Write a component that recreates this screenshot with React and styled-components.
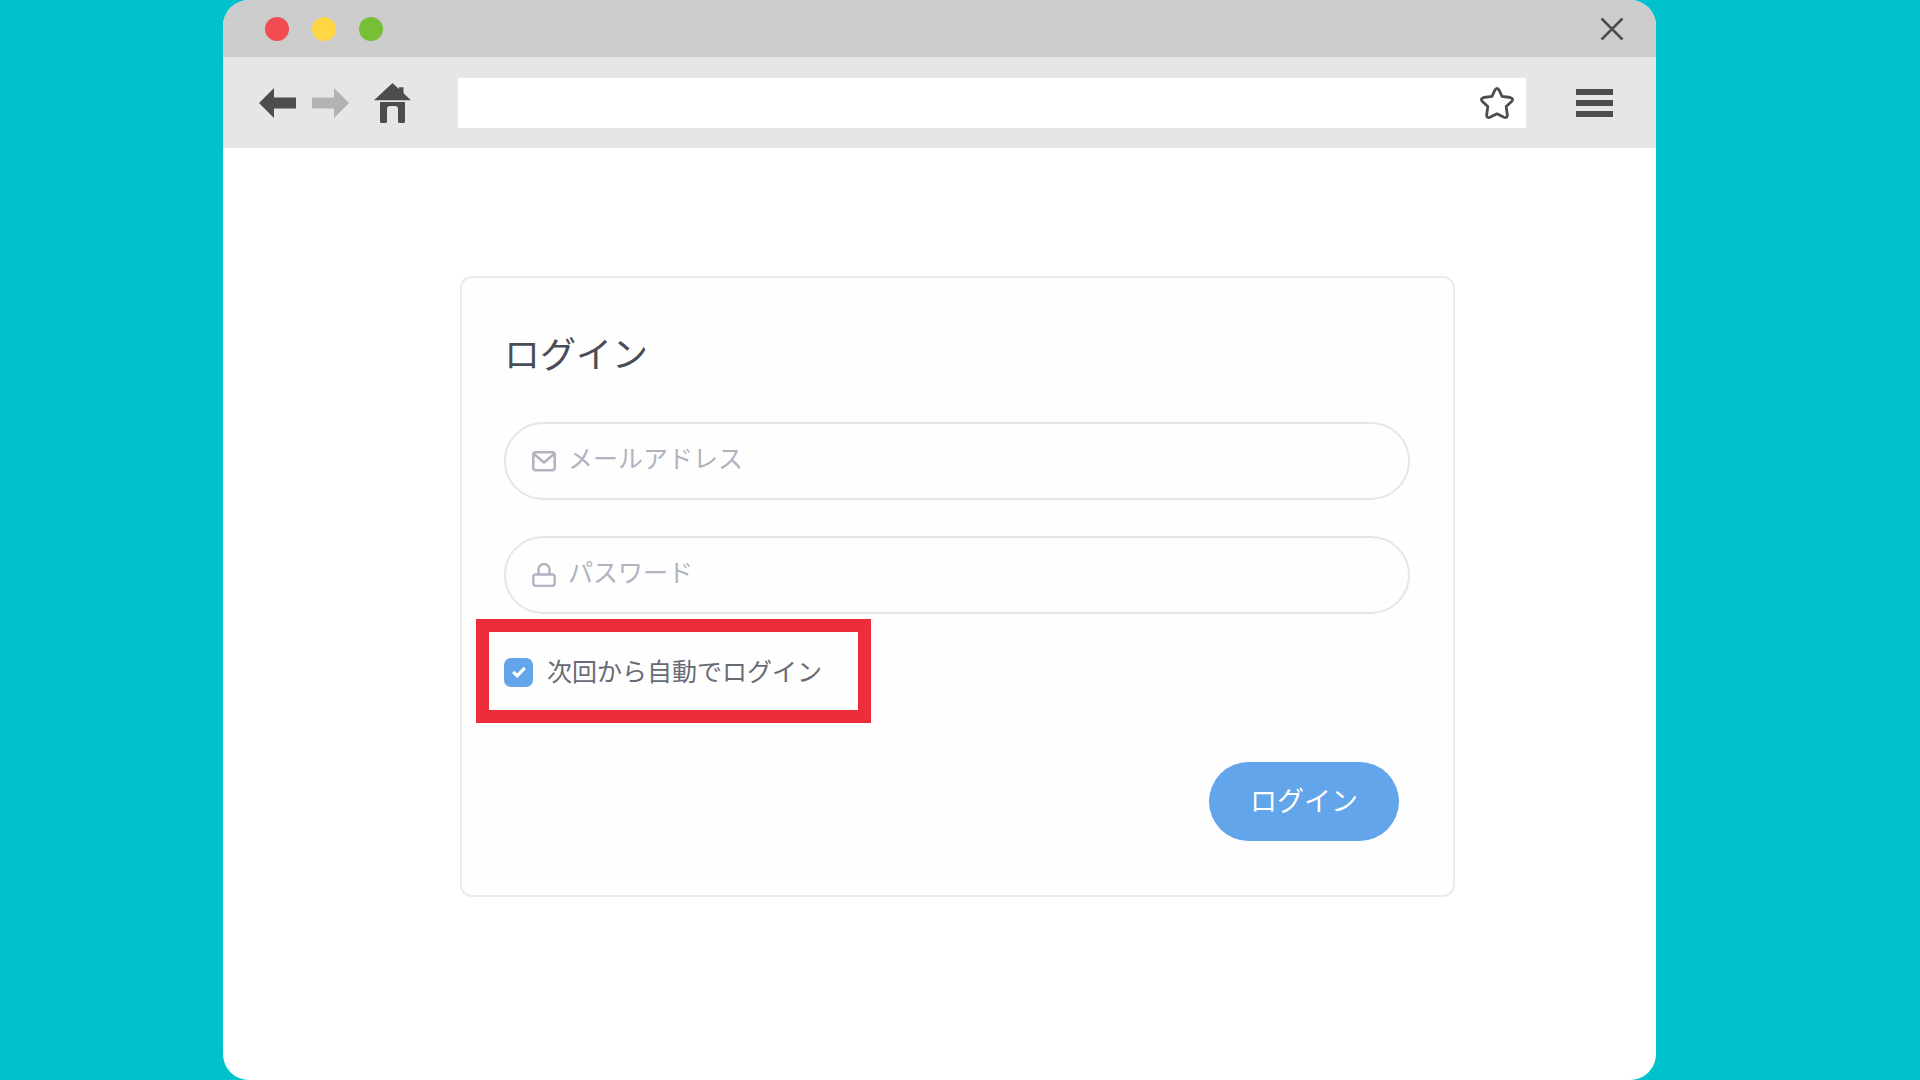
import React, { useState } from "react";
import styled, { createGlobalStyle } from "styled-components";

const GlobalStyle = createGlobalStyle`
  * {
    box-sizing: border-box;
  }

  body {
    margin: 0;
    background: #00c2cd;
    font-family: "Noto Sans CJK JP", sans-serif;
  }

  button, input {
    font-family: inherit;
  }
`;

const Page = styled.div`
  display: flex;
  min-height: 100vh;
  padding: 0 264px 0 223px;
`;

const BrowserWindow = styled.div`
  flex: 1;
  min-width: 0;
  background: #fff;
  border-radius: 26px;
  overflow: hidden;
`;

const TitleBar = styled.header`
  display: flex;
  align-items: center;
  gap: 23px;
  height: 57px;
  padding: 0 32px 0 42px;
  background: #ccc;
`;

const Dot = styled.span`
  width: 24px;
  height: 24px;
  border-radius: 50%;
  background: ${(props) => props.$color};
`;

const IconButton = styled.button`
  display: flex;
  flex: none;
  padding: 0;
  border: 0;
  background: none;
  color: ${(props) => props.$color || "#4d4d4d"};
  cursor: pointer;
`;

const CloseButton = styled(IconButton)`
  margin-left: auto;
`;

const Toolbar = styled.nav`
  display: flex;
  align-items: center;
  height: 91px;
  padding: 0 43px 0 36px;
  background: #e6e6e6;
`;

const NavButtons = styled.div`
  display: flex;
  align-items: center;
  gap: 16px;
  margin-right: 25px;
`;

const AddressBar = styled.div`
  display: flex;
  flex: 1;
  align-items: center;
  min-width: 0;
  height: 50px;
  margin: 0 50px 0 47px;
  padding: 0 12px 0 16px;
  background: #fff;
`;

const AddressInput = styled.input`
  flex: 1;
  min-width: 0;
  border: 0;
  outline: 0;
  background: none;
  font-size: 20px;
`;

const Content = styled.main`
  padding: 128px 201px 40px 237px;
`;

const Card = styled.form`
  display: flex;
  flex-direction: column;
  padding: 47px 43px 54px 42px;
  border: 2px solid #e9ebed;
  border-radius: 12px;
  background: #fefefe;
`;

const Title = styled.h1`
  margin: 0 0 43px;
  color: #4a4d57;
  font-size: 36px;
  font-weight: 400;
  line-height: 54px;
`;

const Fields = styled.div`
  display: grid;
  gap: 36px;
`;

const Field = styled.label`
  display: flex;
  align-items: center;
  gap: 12px;
  height: 78px;
  padding: 0 26px;
  border: 2px solid #e4e7ea;
  border-radius: 40px;
  color: #b0b3c1;
`;

const FieldInput = styled.input`
  flex: 1;
  min-width: 0;
  height: 48px;
  padding: 0 0 8px;
  border: 0;
  outline: 0;
  background: none;
  color: #4a4d57;
  font-size: 25px;

  &::placeholder {
    color: #b0b3c0;
    opacity: 1;
  }
`;

const Highlight = styled.div`
  align-self: flex-start;
  margin: 5px 0 39px -28px;
  padding: 19px 36px 17px 15px;
  border: 13px solid #ed2e3a;
`;

const Remember = styled.label`
  display: flex;
  align-items: center;
  gap: 14px;
  color: #686b76;
  font-size: 25px;
  line-height: 38px;
  cursor: pointer;
`;

const RememberText = styled.span`
  padding-bottom: 4px;
`;

const CheckBox = styled.span`
  display: grid;
  place-items: center;

  > * {
    grid-area: 1 / 1;
  }

  svg {
    pointer-events: none;
  }
`;

const CheckInput = styled.input`
  appearance: none;
  width: 29px;
  height: 29px;
  margin: 0;
  border: 2px solid #62a5ea;
  border-radius: 7px;

  &:checked {
    background: #62a5ea;
  }
`;

const SubmitButton = styled.button`
  align-self: flex-end;
  width: 190px;
  height: 79px;
  margin-right: 11px;
  padding: 0 0 4px;
  border: 0;
  border-radius: 40px;
  background: #62a5ea;
  color: #fff;
  font-size: 27px;
  cursor: pointer;
`;

function ArrowIcon({ flip }) {
  return (
    <svg width="37" height="30" viewBox="0 0 37 30" fill="currentColor" aria-hidden="true">
      <path d={flip ? "M37 15 22 0v9.500H0v11h22V30z" : "M0 15 15 0v9.500h22v11H15V30z"} />
    </svg>
  );
}

function HomeIcon() {
  return (
    <svg width="37" height="40" viewBox="0 0 37 40" fill="currentColor" aria-hidden="true">
      <path d="M18.500 0 25 6V4.300h4.500v6L37 17.200H0z" />
      <path d="M6 19h25v19.500q0 1.500-1.500 1.500h-4q-1.500 0-1.500-1.500V26q0-3-3-3h-5q-3 0-3 3v12.500q0 1.500-1.500 1.500h-4Q6 40 6 38.500z" />
    </svg>
  );
}

function StarIcon() {
  return (
    <svg width="34" height="32" viewBox="0 0 34 32" fill="none" stroke="currentColor" strokeWidth="2.800" strokeLinejoin="round" aria-hidden="true">
      <path d="M14.700 3.500Q17-.5 19.300 3.500L22 9.400l8.300 1.100q3.700 1 1.300 3.900l-5.400 5.200 1.200 8.600q-.2 3.200-3.400 2.100L17 26.800l-7 3.500q-3.200 1.100-3.400-2.100l1.200-8.600-5.400-5.200Q0 11.500 3.700 10.500L12 9.400z" />
    </svg>
  );
}

function MenuIcon() {
  return (
    <svg width="37" height="28" viewBox="0 0 37 28" fill="currentColor" aria-hidden="true">
      <path d="M0 0h37v6H0zM0 11h37v6H0zM0 22h37v6H0z" />
    </svg>
  );
}

function CloseIcon() {
  return (
    <svg width="24" height="24" viewBox="0 0 24 24" fill="none" stroke="currentColor" strokeWidth="2.500" aria-hidden="true">
      <path d="M1.500 1.500l21 21M22.500 1.500l-21 21" />
    </svg>
  );
}

function MailIcon() {
  return (
    <svg width="24" height="24" viewBox="0 0 24 24" fill="none" stroke="currentColor" strokeWidth="2.500" strokeLinejoin="round" aria-hidden="true">
      <rect x="1.300" y="3.300" width="21.400" height="18" rx="2.500" />
      <path d="M2 5l10 8.500L22 5" />
    </svg>
  );
}

function LockIcon() {
  return (
    <svg width="24" height="24" viewBox="0 0 24 24" fill="none" stroke="currentColor" strokeWidth="2.300" aria-hidden="true">
      <rect x="1.300" y="11.500" width="21.400" height="11.300" rx="2.500" />
      <path d="M6.500 11.500V6.500a5.500 5.500 0 0 1 11 0v5" />
    </svg>
  );
}

function CheckIcon() {
  return (
    <svg width="14" height="12" viewBox="0 0 14 12" fill="none" stroke="#fff" strokeWidth="3.200" aria-hidden="true">
      <path d="M1.200 5.800l4 4L12.800 1.800" />
    </svg>
  );
}

function LoginForm() {
  const [remember, setRemember] = useState(true);

  return (
    <Card onSubmit={(e) => e.preventDefault()}>
      <Title>ログイン</Title>
      <Fields>
        <Field>
          <MailIcon />
          <FieldInput type="email" placeholder="メールアドレス" aria-label="メールアドレス" />
        </Field>
        <Field>
          <LockIcon />
          <FieldInput type="password" placeholder="パスワード" aria-label="パスワード" />
        </Field>
      </Fields>
      <Highlight>
        <Remember>
          <CheckBox>
            <CheckInput type="checkbox" checked={remember} onChange={() => setRemember(!remember)} />
            {remember && <CheckIcon />}
          </CheckBox>
          <RememberText>次回から自動でログイン</RememberText>
        </Remember>
      </Highlight>
      <SubmitButton type="submit">ログイン</SubmitButton>
    </Card>
  );
}

function App() {
  return (
    <>
      <GlobalStyle />
      <Page>
        <BrowserWindow>
          <TitleBar>
            <Dot $color="#f14c52" />
            <Dot $color="#ffd744" />
            <Dot $color="#76bf36" />
            <CloseButton type="button" aria-label="閉じる">
              <CloseIcon />
            </CloseButton>
          </TitleBar>
          <Toolbar>
            <NavButtons>
              <IconButton type="button" aria-label="戻る">
                <ArrowIcon />
              </IconButton>
              <IconButton type="button" aria-label="進む" $color="#b3b3b3">
                <ArrowIcon flip />
              </IconButton>
            </NavButtons>
            <IconButton type="button" aria-label="ホーム">
              <HomeIcon />
            </IconButton>
            <AddressBar>
              <AddressInput type="text" aria-label="アドレス" />
              <IconButton type="button" aria-label="ブックマーク">
                <StarIcon />
              </IconButton>
            </AddressBar>
            <IconButton type="button" aria-label="メニュー">
              <MenuIcon />
            </IconButton>
          </Toolbar>
          <Content>
            <LoginForm />
          </Content>
        </BrowserWindow>
      </Page>
    </>
  );
}

export default App;
